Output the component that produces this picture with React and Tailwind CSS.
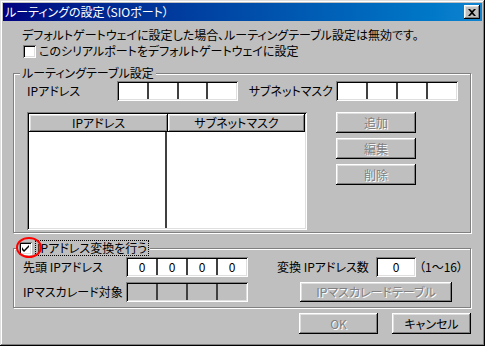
import React from 'react';

const raised = 'shadow-[inset_-1px_-1px_#000,inset_1px_1px_#fff,inset_-2px_-2px_#808080,inset_2px_2px_#dfdfdf]';
const sunken = 'shadow-[inset_1px_1px_#808080,inset_-1px_-1px_#fff,inset_2px_2px_#000,inset_-2px_-2px_#dfdfdf]';
const etched = 'border border-[#808080] shadow-[1px_1px_#fff,inset_1px_1px_#fff]';

function Button({ children, disabled, className = '' }) {
  return (
    <div className={`${raised} flex items-center justify-center ${className}`}>
      <span className={disabled ? 'text-[#808080] [text-shadow:1px_1px_#fff]' : 'text-black'}>{children}</span>
    </div>
  );
}

function IpBox({ values, disabled, className = '' }) {
  const cells = values || ['', '', '', ''];
  return (
    <div className={`${sunken} flex h-[20px] p-[2px] ${disabled ? 'bg-[#bfbfbf]' : 'bg-white'} ${className}`}>
      {cells.map((v, i) => (
        <div key={i} className={`flex-1 flex items-center justify-center ${i > 0 ? 'border-l-2 border-[#404040]' : ''}`}>
          {v}
        </div>
      ))}
    </div>
  );
}

function CheckBox({ checked }) {
  return (
    <div className={`${sunken} w-[13px] h-[13px] bg-white flex items-center justify-center shrink-0`}>
      {checked && (
        <svg width="7" height="7" viewBox="0 0 7 7">
          <path d="M0 2v3l2 2l5-5v-2l-5 5z" fill="#000" />
        </svg>
      )}
    </div>
  );
}

export default function App() {
  return (
    <div className="relative w-[485px] h-[346px] bg-[#bfbfbf] p-[3px] flex flex-col font-['Noto_Sans_CJK_JP',sans-serif] text-[12px] leading-[14px] [font-feature-settings:'palt'] text-black shadow-[inset_-1px_-1px_#000,inset_1px_1px_#dfdfdf,inset_-2px_-2px_#808080,inset_2px_2px_#fff]">
      {/* Title bar */}
      <div className="h-[18px] bg-linear-to-r from-[#000080] to-[#1084d0] flex items-center justify-between pl-[2px] pr-[2px]">
        <span className="text-white text-[12px]">ルーティングの設定（SIOポート）</span>
        <div className={`${raised} bg-[#bfbfbf] w-[16px] h-[14px] flex items-center justify-center`}>
          <svg width="8" height="7" viewBox="0 0 8 7">
            <path d="M0 0h2l2 2l2-2h2l-3 3.5l3 3.5h-2l-2-2l-2 2h-2l3-3.5z" fill="#000" />
          </svg>
        </div>
      </div>

      <div className="flex flex-col pl-[10px] pr-[11px]">
        <div className="mt-[7px] pl-[9px]">デフォルトゲートウェイに設定した場合、ルーティングテーブル設定は無効です。</div>
        <div className="mt-[2px] pl-[10px] flex items-center gap-[3px]">
          <CheckBox />
          <span>このシリアルポートをデフォルトゲートウェイに設定</span>
        </div>

        {/* Routing table group */}
        <div className={`${etched} relative mt-[15px] h-[160px] pt-[6px] pl-[13px] pr-[12px] flex flex-col`}>
          <span className="absolute -top-[8px] left-[6px] px-[2px] bg-[#bfbfbf]">ルーティングテーブル設定</span>
          <div className="flex items-center h-[21px]">
            <span className="w-[90px]">IPアドレス</span>
            <IpBox className="w-[121px]" />
            <span className="ml-auto mr-[3px]">サブネットマスク</span>
            <IpBox className="w-[122px]" />
          </div>
          <div className="flex mt-[11px]">
            <div className={`${sunken} bg-white w-[280px] h-[118px] p-[2px] flex flex-col`}>
              <div className="flex h-[18px]">
                <div className={`${raised} bg-[#bfbfbf] w-[139px] flex items-center justify-center`}>IPアドレス</div>
                <div className={`${raised} bg-[#bfbfbf] flex-1 flex items-center justify-center`}>サブネットマスク</div>
              </div>
              <div className="flex flex-1">
                <div className="w-[138px] border-r-2 border-[#404040]" />
              </div>
            </div>
            <div className="ml-[29px] flex flex-col gap-[5px]">
              <Button disabled className="w-[80px] h-[21px]">追加</Button>
              <Button disabled className="w-[80px] h-[21px]">編集</Button>
              <Button disabled className="w-[80px] h-[21px]">削除</Button>
            </div>
          </div>
        </div>

        {/* IP conversion group */}
        <div className={`${etched} relative mt-[15px] h-[60px] pt-[8px] pl-[9px] pr-[7px] flex flex-col gap-[5px]`}>
          <div className="absolute -top-[8px] left-[3px] px-[2px] bg-[#bfbfbf] flex items-center gap-[4px]">
            <CheckBox checked />
            <span className="outline-1 outline-dotted outline-black px-[1px]">IPアドレス変換を行う</span>
            <div className="absolute -left-[1px] -top-[4px] w-[26px] h-[21px] rounded-[50%] border-2 border-[#ff0000]" />
          </div>
          <div className="flex items-center h-[20px]">
            <span className="w-[103px]">先頭 IPアドレス</span>
            <IpBox className="w-[122px]" values={['0', '0', '0', '0']} />
            <span className="ml-[29px] w-[99px]">変換 IPアドレス数</span>
            <div className={`${sunken} bg-white w-[40px] h-[20px] flex items-center justify-center`}>0</div>
            <span className="ml-[3px]">（1～16）</span>
          </div>
          <div className="flex items-center h-[20px]">
            <span className="w-[103px]">IPマスカレード対象</span>
            <IpBox className="w-[122px]" disabled />
            <Button disabled className="ml-[52px] w-[152px] h-[20px]">IPマスカレードテーブル</Button>
          </div>
        </div>

        <div className="flex justify-end gap-[14px] mt-[5px]">
          <Button disabled className="w-[79px] h-[21px]">OK</Button>
          <Button className="w-[79px] h-[21px]">キャンセル</Button>
        </div>
      </div>
    </div>
  );
}
